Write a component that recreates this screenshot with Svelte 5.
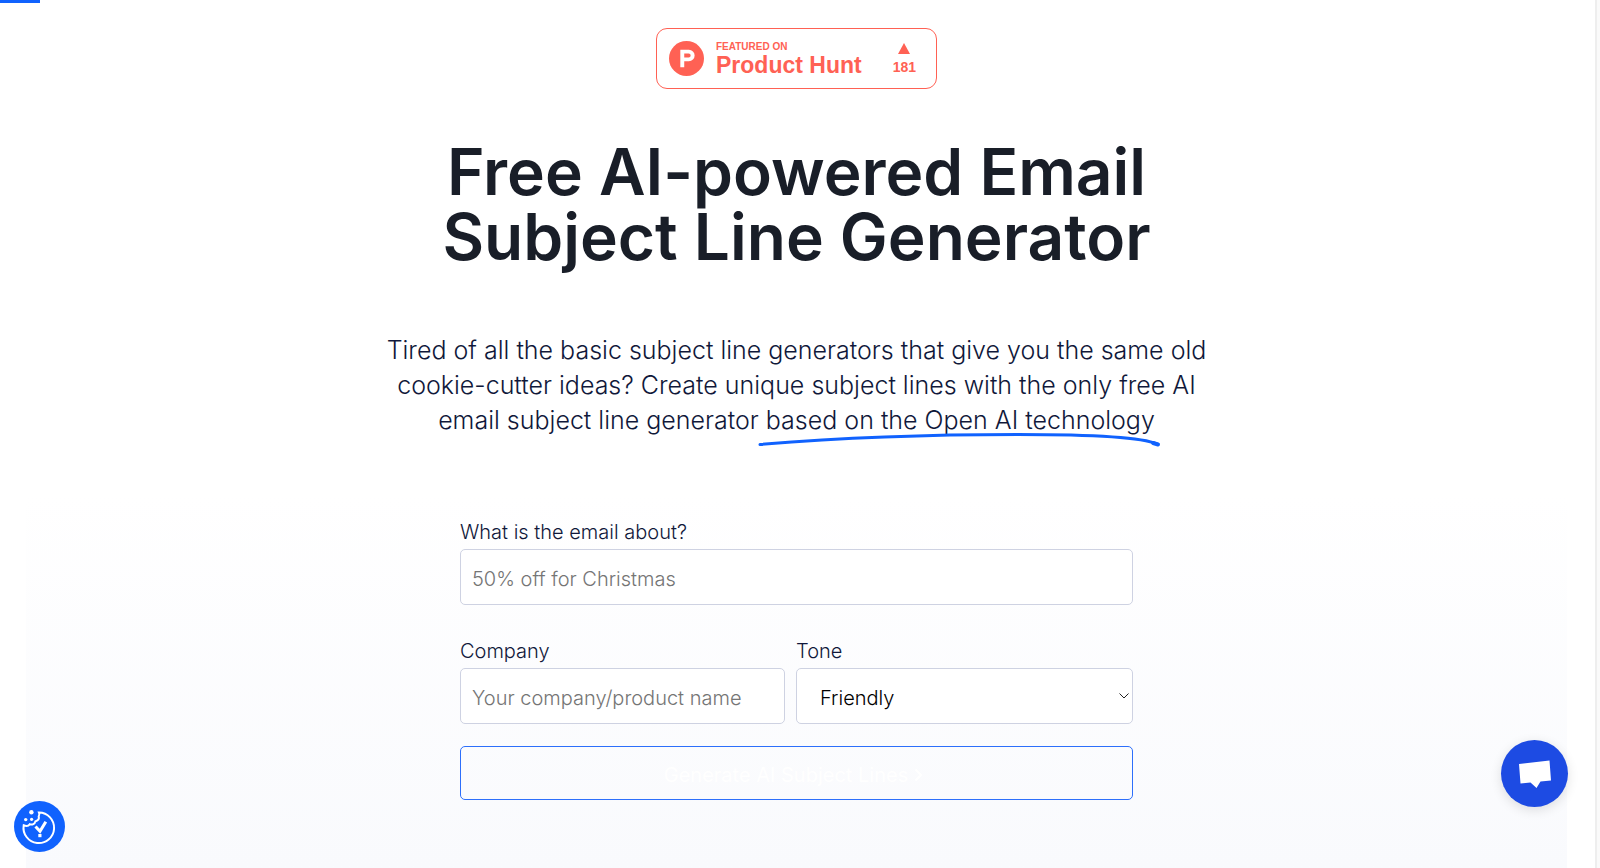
<script lang="ts">
    const tones = ['Friendly', 'Formal', 'Funny', 'Persuasive']

    let about = $state('')
    let company = $state('')
    let tone = $state('Friendly')
</script>

<div class="progress"></div>

<div class="page">
    <main class="hero">
        <a class="badge" href="#producthunt">
            <svg class="badge-logo" viewBox="0 0 34 34" aria-hidden="true">
                <circle cx="17" cy="17" r="17" fill="#ff6154" />
                <path fill="#fff" fill-rule="evenodd" d="M11 8.500h8.300a5.600 5.600 0 0 1 0 11.200h-4.500v5.800H11zM14.800 12.200v3.900h4.300a1.950 1.950 0 0 0 0-3.900z" />
            </svg>
            <span class="badge-text">
                <small>FEATURED ON</small>
                <strong>Product Hunt</strong>
            </span>
            <span class="votes">
                <svg viewBox="0 0 12 11" aria-hidden="true"><path d="M6 0l6 11H0z" fill="#ff6154" /></svg>
                <b>181</b>
            </span>
        </a>

        <h1>Free AI-powered Email<br />Subject Line Generator</h1>

        <p class="lead">
            Tired of all the basic subject line generators that give you the same old<br />
            cookie-cutter ideas? Create unique subject lines with the only free AI<br />
            email subject line generator
            <span class="marked">based on the Open AI technology
                <svg viewBox="0 0 404 16" preserveAspectRatio="none" aria-hidden="true">
                    <path d="M1 12.500C90 5 180 2.500 260 2.500C330 2.500 385 5 400 12" />
                    <path class="end" d="M396 11l5 1.500" />
                </svg>
            </span>
        </p>

        <form onsubmit={(e) => e.preventDefault()}>
            <div class="field wide">
                <label for="about">What is the email about?</label>
                <input id="about" type="text" placeholder="50% off for Christmas" bind:value={about} />
            </div>
            <div class="field">
                <label for="company">Company</label>
                <input id="company" type="text" placeholder="Your company/product name" bind:value={company} />
            </div>
            <div class="field">
                <label for="tone">Tone</label>
                <div class="select">
                    <select id="tone" bind:value={tone}>
                        {#each tones as item}
                            <option>{item}</option>
                        {/each}
                    </select>
                    <svg viewBox="0 0 10 6" aria-hidden="true"><path d="M0.500 0.500L5 5l4.500-4.500" /></svg>
                </div>
            </div>
            <button class="generate wide" type="submit">
                Generate AI Subject Lines
                <svg viewBox="0 0 9 14" aria-hidden="true"><path d="M1.500 1.500L7 7l-5.500 5.500" /></svg>
            </button>
        </form>
    </main>
</div>

<button class="cookies" aria-label="Cookie settings">
    <svg viewBox="0 0 51 51" aria-hidden="true">
        <path class="line" d="M25 11.500A15.300 15.300 0 1 1 9.700 24.300C12 25.200 14.500 25 15.700 23.300C18.200 24.200 21 23 21.300 20.500C24 19.500 25.500 18 24.700 15.500C25.500 14 25.600 12.800 25 11.500z" />
        <path class="tick" d="M21.500 25.500l4.500 4.800l5.800-9.600" />
        <path d="M24.300 33h3.200v3.200h-3.200z" />
        <circle cx="17.400" cy="11.300" r="2.200" />
        <circle cx="11.700" cy="18.600" r="1.700" />
        <circle cx="17.600" cy="18.300" r="1.600" />
    </svg>
</button>

<button class="chat" aria-label="Open chat">
    <svg viewBox="0 0 34 28" aria-hidden="true">
        <path d="M1 4L31.500 0.500L33 20.500L22.500 21.500L18.500 28L12.500 22.500L2.500 23.500z" />
    </svg>
</button>

<style>
    :global(body) {
        background: #fff;
        font-family: Inter, "Liberation Sans", sans-serif;
        color: #10183a;
    }

    .page {
        box-sizing: border-box;
        min-height: 100vh;
        margin-right: 3px;
        padding: 0 28px 0 26px;
        border-right: 2px solid #eee;
        box-shadow: 3px 0 #fafafa;
    }

    .progress {
        position: fixed;
        top: 0;
        left: 0;
        width: 40px;
        height: 3px;
        background: #1062fe;
    }

    .hero {
        box-sizing: border-box;
        display: flex;
        flex-direction: column;
        align-items: center;
        min-height: 100vh;
        padding: 28px 0 64px;
        background: linear-gradient(#fff 57%, #f9fafd);
    }

    .badge {
        box-sizing: border-box;
        display: flex;
        align-items: center;
        width: 281px;
        height: 61px;
        padding: 0 20px 0 12px;
        border: 1px solid #ff6154;
        border-radius: 11px;
        background: #fff;
        color: #ff6154;
        font-family: "Liberation Sans", Arial, sans-serif;
        text-decoration: none;
    }

    .badge-logo {
        width: 35px;
        height: 35px;
        margin-right: 12px;
    }

    .badge-text {
        display: flex;
        flex-direction: column;
        margin-right: auto;
    }

    .badge-text small {
        font-size: 10px;
        font-weight: 700;
        line-height: 12px;
    }

    .badge-text strong {
        font-size: 23px;
        line-height: 24px;
    }

    .votes {
        display: flex;
        flex-direction: column;
        align-items: center;
        gap: 5px;
    }

    .votes svg {
        width: 12px;
        height: 11px;
    }

    .votes b {
        font-size: 14px;
        line-height: 16px;
    }

    h1 {
        margin: 50px 0 0;
        color: #191e28;
        font-size: 64px;
        font-weight: 600;
        line-height: 65px;
        text-align: center;
        white-space: nowrap;
    }

    .lead {
        margin: 64px 0 0;
        font-size: 25px;
        font-weight: 300;
        line-height: 35px;
        text-align: center;
        white-space: nowrap;
    }

    .marked {
        position: relative;
    }

    .marked svg {
        position: absolute;
        left: -7px;
        bottom: -13px;
        width: calc(100% + 13px);
        height: 16px;
        overflow: visible;
    }

    .marked path {
        fill: none;
        stroke: #1062fe;
        stroke-width: 3;
        stroke-linecap: round;
    }

    .marked .end {
        stroke-width: 4;
    }

    form {
        display: grid;
        grid-template-columns: 325px 1fr;
        column-gap: 11px;
        width: 673px;
        max-width: 100%;
        margin-top: 80px;
    }

    .wide {
        grid-column: 1 / -1;
    }

    .field {
        display: flex;
        flex-direction: column;
        margin-bottom: 22px;
    }

    .field.wide {
        margin-bottom: 32px;
    }

    label {
        margin-bottom: 3px;
        font-size: 20px;
        font-weight: 300;
        line-height: 28px;
    }

    input,
    select {
        box-sizing: border-box;
        width: 100%;
        height: 56px;
        padding: 4px 12px 0 11px;
        border: 1px solid #ced2e2;
        border-radius: 5px;
        background: #fff;
        color: #000;
        font-family: inherit;
        font-size: 20px;
        font-weight: 300;
    }

    input::placeholder {
        color: #757575;
        opacity: 1;
    }

    .select {
        position: relative;
    }

    select {
        appearance: none;
        padding: 4px 23px 0;
    }

    .select svg {
        position: absolute;
        right: 4px;
        top: 25px;
        width: 10px;
        height: 6px;
        pointer-events: none;
    }

    .select path {
        fill: none;
        stroke: #222;
    }

    .generate {
        display: flex;
        align-items: center;
        justify-content: center;
        gap: 6px;
        height: 54px;
        padding: 3px 6px 0 0;
        border: 1px solid #2d6ffb;
        border-radius: 5px;
        background: transparent;
        color: #fff;
        font-family: inherit;
        font-size: 20px;
        font-weight: 400;
        cursor: pointer;
    }

    .generate svg {
        width: 9px;
        height: 14px;
    }

    .generate path {
        fill: none;
        stroke: #fff;
        stroke-width: 2;
    }

    .cookies,
    .chat {
        position: fixed;
        display: flex;
        align-items: center;
        justify-content: center;
        padding: 0;
        border: 0;
        border-radius: 50%;
        cursor: pointer;
    }

    .cookies {
        left: 14px;
        bottom: 16px;
        width: 51px;
        height: 51px;
        background: #1062fe;
    }

    .cookies svg {
        width: 51px;
        height: 51px;
        fill: #fff;
    }

    .cookies .line,
    .cookies .tick {
        fill: none;
        stroke: #fff;
        stroke-width: 2;
    }

    .cookies .tick {
        stroke-width: 3;
    }

    .chat {
        right: 32px;
        bottom: 61px;
        width: 67px;
        height: 67px;
        background: #1d4be3;
        box-shadow: 0 3px 12px rgba(0, 0, 0, 0.12);
    }

    .chat svg {
        width: 34px;
        height: 28px;
        fill: #fff;
    }
</style>
